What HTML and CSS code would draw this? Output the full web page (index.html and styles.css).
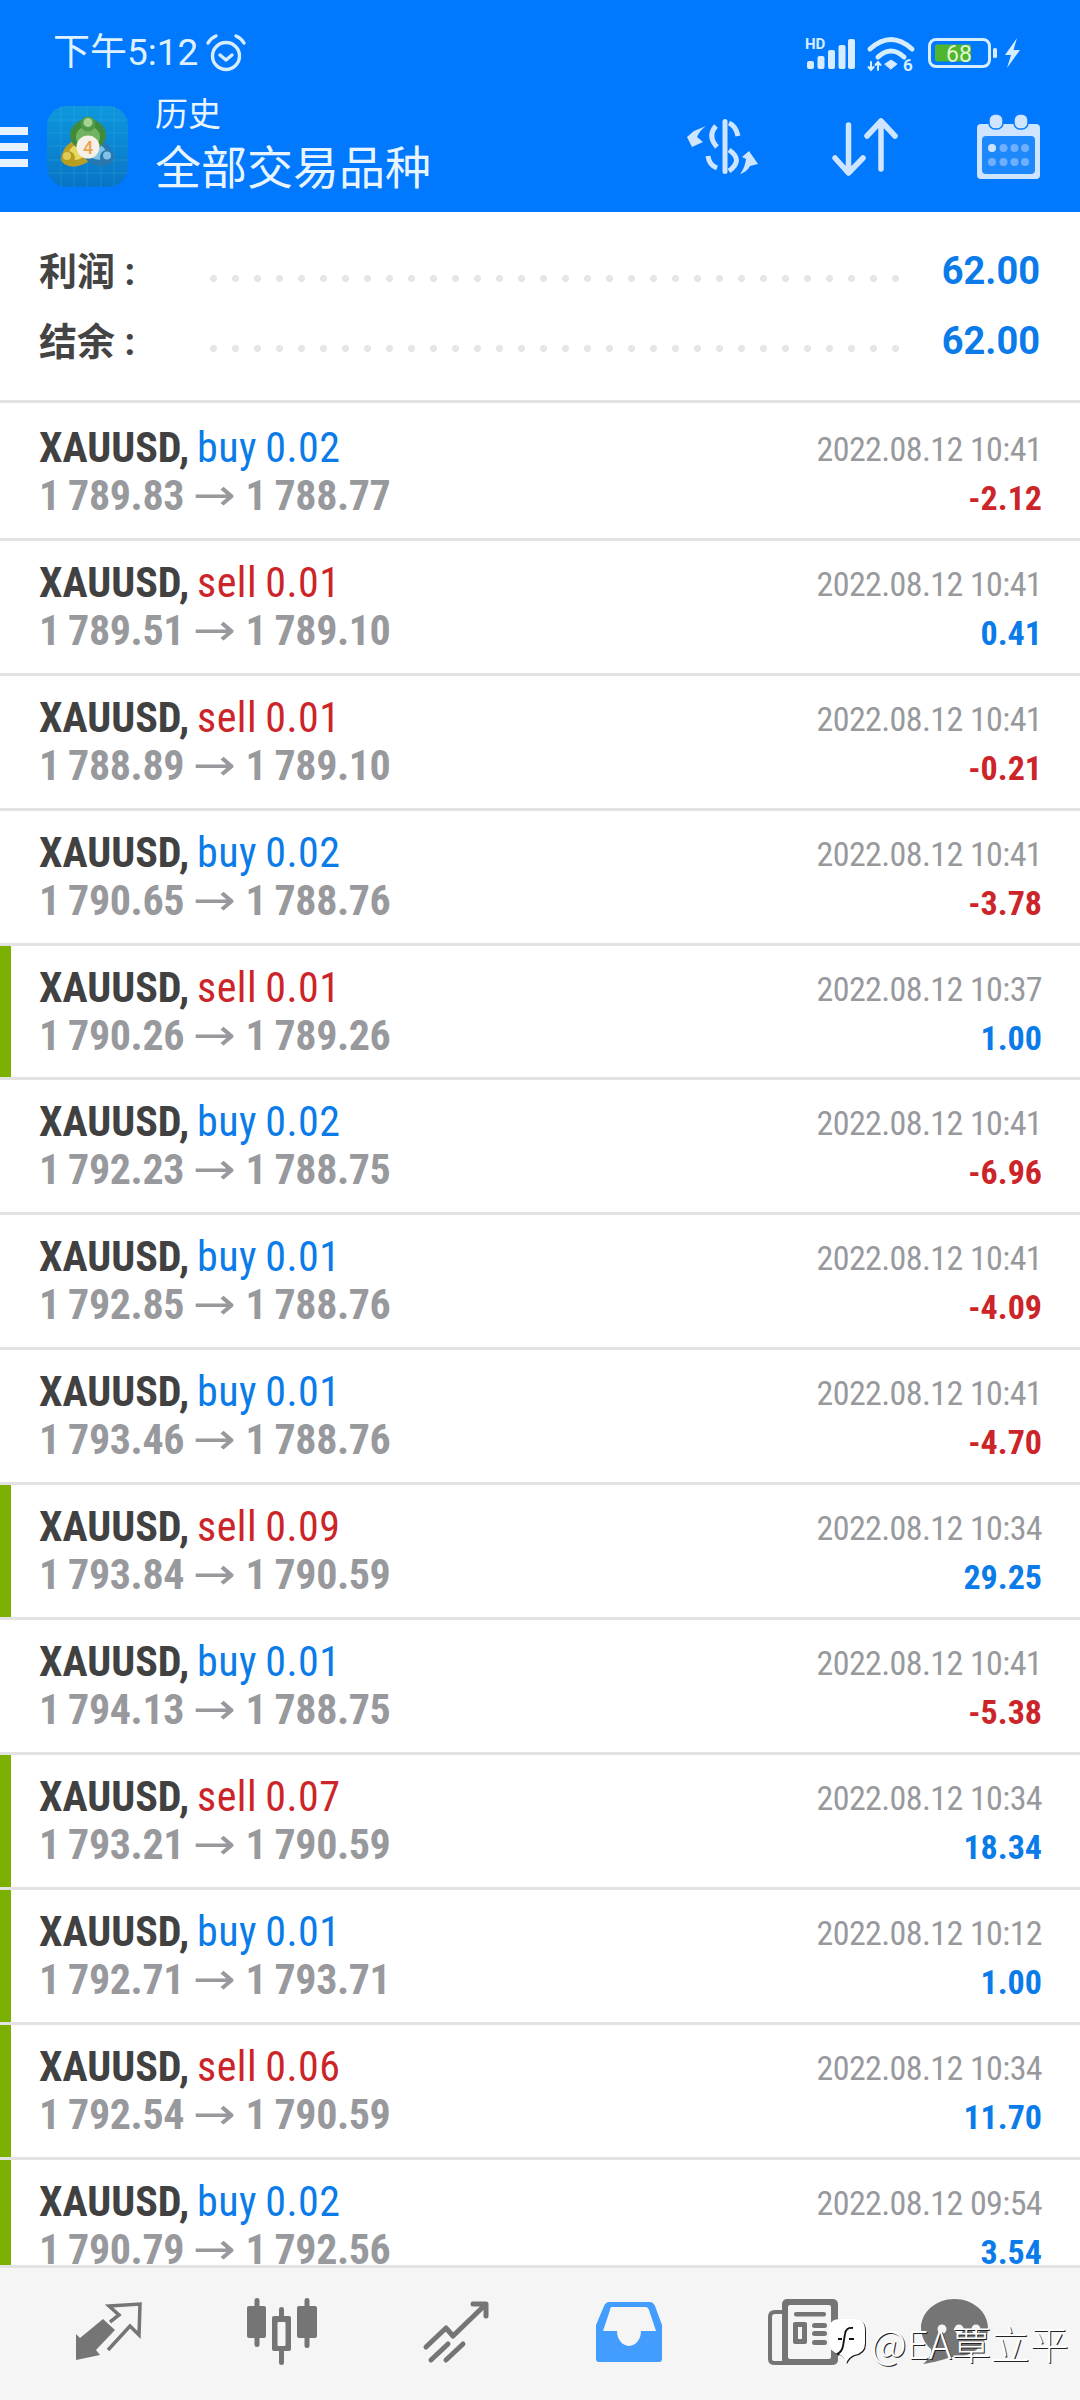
FILE: index.html
```html
<!DOCTYPE html>
<html lang="zh-CN">
<head>
    <meta charset="UTF-8">
    <meta name="viewport" content="width=device-width, initial-scale=1.0">
    <title>历史</title>
    <link rel="stylesheet" href="styles.css">
</head>
<body>
<div id="app">
    <header class="top">
        <div class="status">
            <span class="clock">下午5:12</span>
            <svg class="ic-alarm" viewBox="0 0 40 38" fill="none" stroke="#d6ecff" stroke-width="3.4" stroke-linecap="round" stroke-linejoin="round">
                <circle cx="20" cy="22" r="13.5"/><path d="M14 21l6 5 6-5"/><path d="M2 9Q5 4 10 2M38 9Q35 4 30 2"/>
            </svg>
            <div class="status-right">
                <svg class="ic-signal" viewBox="0 0 50 31" fill="#d6ecff">
                    <text x="0" y="11" font-family="Roboto, sans-serif" font-size="15" font-weight="700">HD</text>
                    <rect x="2" y="23" width="7" height="8" rx="2"/><rect x="12.500" y="18" width="7" height="13" rx="2"/><rect x="23" y="12" width="7" height="19" rx="2"/><rect x="33.500" y="7" width="7" height="24" rx="2"/><rect x="43" y="1" width="7" height="30" rx="2"/>
                </svg>
                <svg class="ic-wifi" viewBox="0 0 48 35" fill="none" stroke="#d6ecff" stroke-width="5" stroke-linecap="round">
                    <path d="M3 13Q24-6 45 13"/><path d="M11 21Q24 9 37 21"/>
                    <path d="M18 28l6-4 6 4-6 5z" fill="#d6ecff" stroke-width="1"/>
                    <path d="M4 26v8M1.500 31l2.500 3 2.500-3M11 34v-8M8.500 29l2.500-3 2.500 3" stroke-width="2"/>
                    <text x="36" y="35" font-family="Roboto, sans-serif" font-size="17" font-weight="700" fill="#d6ecff" stroke="none">6</text>
                </svg>
                <svg class="ic-battery" viewBox="0 0 70 30">
                    <rect x="1.500" y="1.500" width="60" height="27" rx="6.500" fill="none" stroke="#d6ecff" stroke-width="3"/>
                    <rect x="7" y="6.500" width="36" height="17" rx="2" fill="#4fb52e"/>
                    <rect x="65" y="10" width="4" height="10" rx="1.500" fill="#d6ecff"/>
                    <text x="31" y="23.500" text-anchor="middle" font-family="Roboto, sans-serif" font-size="23" fill="#dff7d0">68</text>
                </svg>
                <svg class="ic-bolt" viewBox="0 0 17 30" fill="#d6ecff"><path d="M13 0L1 17h6L3 30 16 12H9.500z"/></svg>
            </div>
        </div>
        <div class="toolbar">
            <div class="burger"><span></span><span></span><span></span></div>
            <svg class="logo" viewBox="0 0 81 81">
                <defs><linearGradient id="lg" x1="0" y1="0" x2="0" y2="1"><stop offset="0" stop-color="#0e98de"/><stop offset="1" stop-color="#0874c6"/></linearGradient></defs>
                <rect width="81" height="81" rx="20" fill="url(#lg)"/>
                <path d="M14 0V81M27 0V81M40 0V81M54 0V81M67 0V81M0 14H81M0 27H81M0 40H81M0 54H81M0 67H81" stroke="#5cc0ea" stroke-opacity=".22"/>
                <path d="M31 33C20 36 13 46 15 55 20 63 34 62 43 54Z" fill="#b89f24"/><path d="M30 38C24 41 20 46 21 51 27 56 34 54 38 49Z" fill="#e8d860"/><circle cx="21" cy="52" r="7" fill="#b79c22"/><circle cx="20" cy="50" r="4" fill="#e0cc54"/>
                <path d="M51 33C61 36 68 46 66 55 60 63 46 62 38 52Z" fill="#2878b0"/><path d="M52 38C57 41 61 46 59 50 54 56 46 54 42 49Z" fill="#7ec2e6"/><circle cx="60" cy="51" r="7" fill="#2a76ad"/><circle cx="60" cy="49.500" r="4" fill="#7fc4e8"/>
                <ellipse cx="41" cy="29" rx="18" ry="16" fill="#3f8b3c"/><ellipse cx="41" cy="31" rx="12" ry="11" fill="#72b362"/><circle cx="41" cy="18" r="7.500" fill="#4f9a48"/><circle cx="41" cy="16.500" r="4.500" fill="#a4d490"/>
                <circle cx="41" cy="41" r="11.500" fill="#f6f1e8"/>
                <text x="41" y="47.500" text-anchor="middle" font-family="Roboto, sans-serif" font-size="18" font-weight="500" fill="#eea04c">4</text>
            </svg>
            <div class="titles">
                <div class="title-sm">历史</div>
                <div class="title-lg">全部交易品种</div>
            </div>
            <div class="tools">
                <svg class="ic-dollar" viewBox="0 0 73 55" fill="#cfe5ff">
                    <rect x="36.500" width="5" height="55" rx="2.500"/>
                    <g fill="none" stroke="#cfe5ff" stroke-width="5">
                        <path d="M30 7Q21 17 31 28"/><path d="M43 4Q50 7 52 17"/><path d="M43 31Q58 41 43 52"/><path d="M22 37Q23 46 31 49"/>
                    </g>
                    <path d="M20 7L8 12 1 18 6 28 17 23 11 18Q14 11 20 7z"/>
                    <path d="M72 45L63 32 56 38 60 40Q59 49 54 55 62 52 64 47z"/>
                </svg>
                <svg class="ic-arrows" viewBox="0 0 66 58" fill="none" stroke="#cfe5ff" stroke-width="5.500" stroke-linecap="round" stroke-linejoin="round">
                    <path d="M16.500 7V55M3 40L16.500 55 31 40"/><path d="M49 3V51M35 18L49 3 63 18"/>
                </svg>
                <svg class="ic-cal" viewBox="0 0 63 65">
                    <rect y="10" width="63" height="55" rx="4" fill="#cfe5ff"/>
                    <rect x="5" y="22" width="53" height="38" rx="4" fill="#1d88fb"/>
                    <rect x="12" y="0" width="14" height="15" rx="6" fill="#cfe5ff" stroke="#0a7cff" stroke-width="1.500"/>
                    <rect x="37" y="0" width="14" height="15" rx="6" fill="#cfe5ff" stroke="#0a7cff" stroke-width="1.500"/>
                    <g fill="#6eb0ff"><circle cx="15" cy="34" r="4" fill="#cfe5ff"/><circle cx="26.500" cy="34" r="4"/><circle cx="37.500" cy="34" r="4"/><circle cx="48" cy="34" r="4"/><circle cx="15" cy="48" r="4"/><circle cx="26.500" cy="48" r="4"/><circle cx="37.500" cy="48" r="4"/><circle cx="48" cy="48" r="4"/></g>
                </svg>
            </div>
        </div>
    </header>

    <section class="summary">
        <div class="sum-row"><span class="sum-label">利润 :</span><span class="dots"></span><span class="sum-val">62.00</span></div>
        <div class="sum-row"><span class="sum-label">结余 :</span><span class="dots"></span><span class="sum-val">62.00</span></div>
    </section>

    <main class="list">
        <div class="row"><div class="left"><div class="l1"><b>XAUUSD,</b> <span class="buy">buy 0.02</span></div><div class="l2">1 789.83 <i>→</i> 1 788.77</div></div><div class="right"><div class="date">2022.08.12 10:41</div><div class="pl neg">-2.12</div></div></div>
        <div class="row"><div class="left"><div class="l1"><b>XAUUSD,</b> <span class="sell">sell 0.01</span></div><div class="l2">1 789.51 <i>→</i> 1 789.10</div></div><div class="right"><div class="date">2022.08.12 10:41</div><div class="pl pos">0.41</div></div></div>
        <div class="row"><div class="left"><div class="l1"><b>XAUUSD,</b> <span class="sell">sell 0.01</span></div><div class="l2">1 788.89 <i>→</i> 1 789.10</div></div><div class="right"><div class="date">2022.08.12 10:41</div><div class="pl neg">-0.21</div></div></div>
        <div class="row"><div class="left"><div class="l1"><b>XAUUSD,</b> <span class="buy">buy 0.02</span></div><div class="l2">1 790.65 <i>→</i> 1 788.76</div></div><div class="right"><div class="date">2022.08.12 10:41</div><div class="pl neg">-3.78</div></div></div>
        <div class="row mark"><div class="left"><div class="l1"><b>XAUUSD,</b> <span class="sell">sell 0.01</span></div><div class="l2">1 790.26 <i>→</i> 1 789.26</div></div><div class="right"><div class="date">2022.08.12 10:37</div><div class="pl pos">1.00</div></div></div>
        <div class="row"><div class="left"><div class="l1"><b>XAUUSD,</b> <span class="buy">buy 0.02</span></div><div class="l2">1 792.23 <i>→</i> 1 788.75</div></div><div class="right"><div class="date">2022.08.12 10:41</div><div class="pl neg">-6.96</div></div></div>
        <div class="row"><div class="left"><div class="l1"><b>XAUUSD,</b> <span class="buy">buy 0.01</span></div><div class="l2">1 792.85 <i>→</i> 1 788.76</div></div><div class="right"><div class="date">2022.08.12 10:41</div><div class="pl neg">-4.09</div></div></div>
        <div class="row"><div class="left"><div class="l1"><b>XAUUSD,</b> <span class="buy">buy 0.01</span></div><div class="l2">1 793.46 <i>→</i> 1 788.76</div></div><div class="right"><div class="date">2022.08.12 10:41</div><div class="pl neg">-4.70</div></div></div>
        <div class="row mark"><div class="left"><div class="l1"><b>XAUUSD,</b> <span class="sell">sell 0.09</span></div><div class="l2">1 793.84 <i>→</i> 1 790.59</div></div><div class="right"><div class="date">2022.08.12 10:34</div><div class="pl pos">29.25</div></div></div>
        <div class="row"><div class="left"><div class="l1"><b>XAUUSD,</b> <span class="buy">buy 0.01</span></div><div class="l2">1 794.13 <i>→</i> 1 788.75</div></div><div class="right"><div class="date">2022.08.12 10:41</div><div class="pl neg">-5.38</div></div></div>
        <div class="row mark"><div class="left"><div class="l1"><b>XAUUSD,</b> <span class="sell">sell 0.07</span></div><div class="l2">1 793.21 <i>→</i> 1 790.59</div></div><div class="right"><div class="date">2022.08.12 10:34</div><div class="pl pos">18.34</div></div></div>
        <div class="row mark"><div class="left"><div class="l1"><b>XAUUSD,</b> <span class="buy">buy 0.01</span></div><div class="l2">1 792.71 <i>→</i> 1 793.71</div></div><div class="right"><div class="date">2022.08.12 10:12</div><div class="pl pos">1.00</div></div></div>
        <div class="row mark"><div class="left"><div class="l1"><b>XAUUSD,</b> <span class="sell">sell 0.06</span></div><div class="l2">1 792.54 <i>→</i> 1 790.59</div></div><div class="right"><div class="date">2022.08.12 10:34</div><div class="pl pos">11.70</div></div></div>
        <div class="row mark"><div class="left"><div class="l1"><b>XAUUSD,</b> <span class="buy">buy 0.02</span></div><div class="l2">1 790.79 <i>→</i> 1 792.56</div></div><div class="right"><div class="date">2022.08.12 09:54</div><div class="pl pos">3.54</div></div></div>
    </main>

    <nav class="tabs">
        <svg class="tab-trade" viewBox="0 0 67 59">
            <path d="M28 17L40 28 21 48 25 53 1 58 1 32 5 36z" fill="#757575"/>
            <path d="M33 48L55 24 64 33 65 2 34 4 44 13 35 20" fill="none" stroke="#757575" stroke-width="3.500"/>
        </svg>
        <svg class="tab-candles" viewBox="0 0 70 68" fill="#757575">
            <rect x="7.500" width="5" height="49" rx="2.500"/><rect y="8" width="19" height="32" rx="2"/>
            <rect x="57.500" width="5" height="50" rx="2.500"/><rect x="50" y="8" width="20" height="32" rx="2"/>
            <rect x="32" y="9" width="5" height="58" rx="2.500"/><rect x="25" y="18" width="19" height="35" rx="2"/><rect x="30.500" y="24" width="8" height="24" rx="1" fill="#f5f5f5"/>
        </svg>
        <svg class="tab-chart" viewBox="0 0 66 60" fill="none" stroke="#757575" stroke-width="5" stroke-linecap="round" stroke-linejoin="round">
            <path d="M3 45L23 26 30 34 62 3M50 2H63V14"/><path d="M8 58L25 42M23 58L40 42"/>
        </svg>
        <svg class="tab-inbox" viewBox="0 0 66 60">
            <path d="M13 0H54Q57 0 59 4L66 23V57Q66 60 63 60H3Q0 60 0 57V23L8 4Q10 0 13 0Z" fill="#429dff"/>
            <path d="M16 5H50Q52 5 53 8L60 29H45A12 15 0 0 1 21 29H7L14 8Q14 5 16 5Z" fill="#f5f5f5"/>
        </svg>
        <svg class="tab-news" viewBox="0 0 70 66" fill="#757575">
            <path d="M15 13H7Q2 13 2 18V60Q2 64 7 64H20" fill="none" stroke="#757575" stroke-width="4"/>
            <rect x="14" width="56" height="66" rx="5"/>
            <rect x="20" y="6" width="43" height="54" rx="2" fill="#f5f5f5"/>
            <rect x="26" y="13" width="32" height="4.500" rx="2"/>
            <rect x="25" y="23" width="14" height="22" rx="2"/><rect x="30" y="28" width="4" height="12" fill="#f5f5f5"/>
            <rect x="44" y="24" width="15" height="5" rx="2.500"/><rect x="44" y="32" width="15" height="5" rx="2.500"/><rect x="44" y="41" width="15" height="5" rx="2.500"/>
        </svg>
        <svg class="tab-chat" viewBox="0 0 67 66" fill="#757575">
            <path d="M33.500 0C52 0 67 13 67 29S52 58 33.500 58C26 58 22 62 2 65 8 60 11 55 10 50 4 45 0 37 0 29 0 13 15 0 33.500 0Z"/>
            <g fill="#f5f5f5"><circle cx="21" cy="30" r="4.500"/><circle cx="38" cy="30" r="4.500"/><circle cx="55" cy="30" r="4.500"/></g>
        </svg>
    </nav>

    <div class="watermark">
        <svg class="wm-logo" viewBox="0 0 37 45">
            <path d="M11 0H25Q36 0 36 11V24Q36 34 25 36 20 38 17 44 16 38 10 35 0 33 0 23V11Q0 0 11 0Z" fill="#fff"/>
            <path d="M24 9Q17 8 16 15L14 27Q13 33 8 35M9 20H13M20 20H25" fill="none" stroke="#111" stroke-width="1.800"/>
        </svg>
        <span>@EA覃立平</span>
    </div>
</div>
</body>
</html>
```

FILE: styles.css
```css
* {
    box-sizing: border-box;
}
html, body {
    margin: 0;
    height: 100%;
}
body {
    font-family: Roboto, "Noto Sans CJK SC", sans-serif;
    background-color: #fff;
}
svg {
    overflow: visible;
}
#app {
    position: relative;
    display: flex;
    flex-direction: column;
    width: 1080px;
    height: 2400px;
    overflow: hidden;
}

/* top blue area */
.top {
    height: 212px;
    padding-top: 33px;
    background-color: #0079ff;
    color: #e8f4ff;
}
.status {
    display: flex;
    align-items: center;
    height: 40px;
    padding: 0 59px 0 53px;
}
.clock {
    font-size: 37px;
    line-height: 40px;
    color: #dff0ff;
}
.ic-alarm {
    width: 40px;
    height: 38px;
    margin-left: 8px;
}
.status-right {
    display: flex;
    align-items: center;
    margin-left: auto;
}
.ic-signal {
    width: 50px;
    height: 31px;
}
.ic-wifi {
    width: 48px;
    height: 35px;
    margin-left: 12px;
}
.ic-battery {
    width: 70px;
    height: 30px;
    margin-left: 13px;
}
.ic-bolt {
    width: 17px;
    height: 30px;
    margin-left: 6px;
}

.toolbar {
    display: flex;
    align-items: center;
    height: 93px;
    margin-top: 27px;
    padding-right: 40px;
}
.burger {
    display: flex;
    flex-direction: column;
    gap: 8px;
    width: 28px;
}
.burger span {
    display: block;
    height: 8px;
    background-color: #e6f3ff;
}
.logo {
    width: 81px;
    height: 81px;
    margin-left: 19px;
}
.titles {
    margin-left: 27px;
}
.title-sm {
    font-size: 33px;
    line-height: 40px;
    margin-top: -3px;
}
.title-lg {
    font-size: 46px;
    line-height: 53px;
    margin-top: 7px;
}
.tools {
    display: flex;
    align-items: center;
    margin-left: auto;
}
.ic-dollar {
    width: 73px;
    height: 55px;
}
.ic-arrows {
    width: 66px;
    height: 58px;
    margin: 0 79px 0 73px;
}
.ic-cal {
    width: 63px;
    height: 65px;
}

/* summary */
.summary {
    height: 191px;
    padding: 23px 40px 0 39px;
    border-bottom: 3px solid #e3e3e3;
}
.sum-row {
    display: flex;
    align-items: center;
    height: 70px;
}
.sum-label {
    width: 171px;
    margin-top: -3px;
    font-size: 38px;
    font-weight: 700;
    color: #444;
}
.dots {
    width: 704px;
    height: 7px;
    margin-top: 16px;
    background-image: radial-gradient(circle at 3.500px 3.500px, #e6e6e6 3.300px, transparent 3.800px);
    background-size: 22px 7px;
}
.sum-val {
    margin-left: auto;
    margin-top: 2px;
    font-size: 38px;
    font-weight: 700;
    color: #0a7be8;
}

/* history rows */
.list {
    flex: 1;
    min-height: 0;
    padding-top: 3px;
    overflow: hidden;
}
.row {
    display: flex;
    justify-content: space-between;
    height: 134.900px;
    padding: 18px 38px 0 39px;
    border-bottom: 3px solid #e3e3e3;
    font-family: "Roboto Condensed", Roboto, sans-serif;
    font-stretch: 80%;
}
.mark {
    box-shadow: inset 11px 0 0 #7cb000;
}
.l1 {
    font-size: 42px;
    line-height: 48px;
    word-spacing: -2px;
    white-space: nowrap;
}
.l1 b {
    font-weight: 700;
    color: #414141;
}
.buy {
    letter-spacing: .5px;
    color: #0a7be8;
}
.sell {
    letter-spacing: .5px;
    color: #cc2529;
}
.l2 {
    font-size: 42px;
    line-height: 47px;
    font-weight: 700;
    font-stretch: 75%;
    letter-spacing: -.4px;
    word-spacing: -1px;
    color: #98999d;
    white-space: nowrap;
}
.l2 i {
    display: inline-block;
    margin: 0 6px;
    font-family: "DejaVu Sans", sans-serif;
    font-size: 44px;
    font-style: normal;
    font-weight: 400;
    line-height: 40px;
    transform: scaleX(1.3);
}
.right {
    margin-top: 1px;
    text-align: right;
}
.date, .pl {
    font-size: 34px;
    line-height: 48px;
    font-stretch: 75%;
    white-space: nowrap;
}
.date {
    letter-spacing: -.6px;
    color: #98999d;
}
.pl {
    font-weight: 700;
    margin-top: 1px;
}
.pos {
    color: #0a7be8;
}
.neg {
    color: #cc2529;
}

/* bottom nav */
.tabs {
    display: flex;
    align-items: center;
    gap: 105px;
    height: 135px;
    padding: 0 0 5px 75px;
    border-top: 3px solid #e3e3e3;
    background-color: #f5f5f5;
}
.tab-trade {
    width: 67px;
    height: 59px;
}
.tab-candles {
    width: 70px;
    height: 68px;
}
.tab-chart {
    width: 66px;
    height: 60px;
    margin-left: 1px;
}
.tab-inbox {
    width: 66px;
    height: 60px;
    margin-left: 2px;
}
.tab-news {
    width: 70px;
    height: 66px;
    margin-left: 1px;
}
.tab-chat {
    width: 67px;
    height: 66px;
    margin-left: -22px;
}

/* watermark lies over the nav bar */
.watermark {
    position: absolute;
    left: 829px;
    top: 2319px;
    display: flex;
    align-items: center;
    gap: 5px;
    font-family: "Noto Sans CJK SC", sans-serif;
    font-size: 39px;
    font-weight: 300;
    line-height: 44px;
    color: #fff;
    text-shadow: 1px 1px 0 #222;
    white-space: nowrap;
}
.wm-logo {
    width: 37px;
    height: 45px;
    filter: drop-shadow(1px 1px 0 #222);
}
```
